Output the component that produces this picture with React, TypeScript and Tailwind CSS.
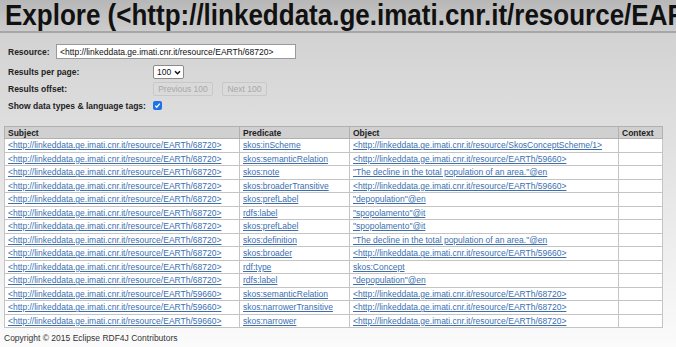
import React from 'react';

const S1 = '<http://linkeddata.ge.imati.cnr.it/resource/EARTh/68720>';
const S2 = '<http://linkeddata.ge.imati.cnr.it/resource/EARTh/59660>';

const rows: [string, string, string][] = [
  [S1, 'skos:inScheme', '<http://linkeddata.ge.imati.cnr.it/resource/SkosConceptScheme/1>'],
  [S1, 'skos:semanticRelation', S2],
  [S1, 'skos:note', '"The decline in the total population of an area."@en'],
  [S1, 'skos:broaderTransitive', S2],
  [S1, 'skos:prefLabel', '"depopulation"@en'],
  [S1, 'rdfs:label', '"spopolamento"@it'],
  [S1, 'skos:prefLabel', '"spopolamento"@it'],
  [S1, 'skos:definition', '"The decline in the total population of an area."@en'],
  [S1, 'skos:broader', S2],
  [S1, 'rdf:type', 'skos:Concept'],
  [S1, 'rdfs:label', '"depopulation"@en'],
  [S2, 'skos:semanticRelation', S1],
  [S2, 'skos:narrowerTransitive', S1],
  [S2, 'skos:narrower', S1],
];

function Cell({ text }: { text: string }) {
  return (
    <td className="border border-[#c4c4c4] px-[3px] py-0 whitespace-nowrap overflow-hidden">
      <a href="#" className="text-[#3b6fb0] underline">{text}</a>
    </td>
  );
}

export default function App() {
  return (
    <div
      className="h-[347px] w-[676px] overflow-hidden bg-gradient-to-b from-[#cecece] to-[#fbfbfb] text-[8.5px] leading-[10px] text-[#222]"
      style={{ fontFamily: '"Liberation Sans", Arial, sans-serif' }}
    >
      {/* title bar */}
      <div className="h-[33px] border-b-2 border-[#a6a6a6] bg-gradient-to-b from-[#b7b7b7] to-[#cdcdcd] overflow-hidden">
        <h1 className="pl-[5px] text-[26px] leading-[29px] font-bold text-[#111] whitespace-nowrap scale-y-[1.1] origin-top">
          Explore (&lt;http://linkeddata.ge.imati.cnr.it/resource/EARTh/68720&gt;)
        </h1>
      </div>

      {/* form */}
      <div className="pl-[8px] pt-[11px]">
        <div className="flex items-center h-[15px]">
          <span className="font-bold w-[48px]">Resource:</span>
          <div className="w-[240px] h-[15px] bg-white border border-[#9a9a9a] pl-[3px] flex items-center text-[#111]">
            &lt;http://linkeddata.ge.imati.cnr.it/resource/EARTh/68720&gt;
          </div>
        </div>
        <div className="flex items-center h-[14px] mt-[6px]">
          <span className="font-bold w-[145px]">Results per page:</span>
          <div className="w-[31px] h-[14px] bg-white border border-[#8a8a8a] rounded-[2px] flex items-center pl-[3px] gap-[3px] text-[#111]">
            100
            <svg width="7" height="5" viewBox="0 0 8 6"><path d="M1 1.5 L4 4.5 L7 1.5" fill="none" stroke="#111" strokeWidth="1.8" /></svg>
          </div>
        </div>
        <div className="flex items-center h-[14px] mt-[3px]">
          <span className="font-bold w-[145px]">Results offset:</span>
          <div className="flex gap-[9px]">
            <button className="w-[60px] h-[14px] border border-[#c8c8c8] rounded-[2px] bg-[#dadada] text-[#a8a8a8] leading-[10px]">Previous 100</button>
            <button className="w-[45px] h-[14px] border border-[#c8c8c8] rounded-[2px] bg-[#dadada] text-[#a8a8a8] leading-[10px]">Next 100</button>
          </div>
        </div>
        <div className="flex items-center h-[13px] mt-[3px]">
          <span className="font-bold w-[145px]">Show data types &amp; language tags:</span>
          <div className="w-[9px] h-[9px] bg-[#1a73e8] rounded-[2px] flex items-center justify-center">
            <svg width="7" height="7" viewBox="0 0 8 8"><path d="M1.5 4.2 L3.2 6 L6.6 1.8" fill="none" stroke="#fff" strokeWidth="1.5" /></svg>
          </div>
        </div>
      </div>

      {/* table */}
      <table className="ml-[4px] mt-[14px] border-collapse bg-white border border-[#b0b0b0] table-fixed w-[658px]">
        <colgroup>
          <col className="w-[235px]" />
          <col className="w-[110px]" />
          <col className="w-[269px]" />
          <col className="w-[44px]" />
        </colgroup>
        <thead>
          <tr className="h-[12px] bg-[#d0d0d0]">
            {['Subject', 'Predicate', 'Object', 'Context'].map((h) => (
              <th key={h} className="border border-[#b0b0b0] px-[3px] py-0 text-left font-bold text-[#222]">{h}</th>
            ))}
          </tr>
        </thead>
        <tbody>
          {rows.map((r, i) => (
            <tr key={i} className="h-[13.5px]">
              <Cell text={r[0]} />
              <Cell text={r[1]} />
              <Cell text={r[2]} />
              <td className="border border-[#c4c4c4]"></td>
            </tr>
          ))}
        </tbody>
      </table>

      <div className="pl-[4px] pt-[5px] text-[#333]">Copyright © 2015 Eclipse RDF4J Contributors</div>
    </div>
  );
}
